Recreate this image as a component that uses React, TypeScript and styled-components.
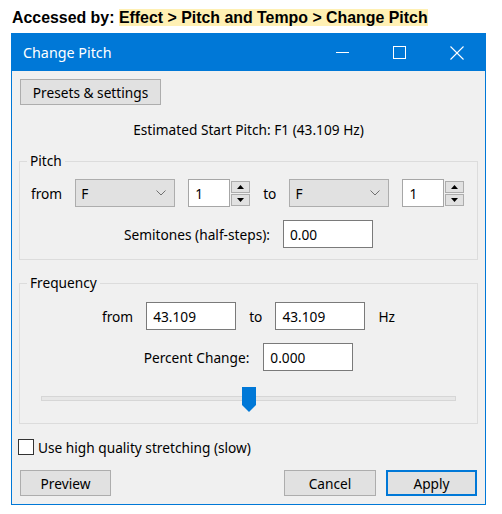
import React from 'react';
import styled, { createGlobalStyle } from 'styled-components';

const UI_FONT = `"Noto Sans", "Segoe UI", sans-serif`;
const UI_SIZE = '13.7px';

const GlobalStyle = createGlobalStyle`
  html, body { margin: 0; padding: 0; background: #ffffff; }
  body { font-family: ${UI_FONT}; }
  * { box-sizing: border-box; }
`;

const Page = styled.div`
  width: 502px;
  height: 514px;
  overflow: hidden;
`;

const Header = styled.div`
  height: 33px;
  padding: 9px 0 0 12px;
  font-family: "Liberation Sans", Arial, sans-serif;
  font-weight: bold;
  font-size: 15.9px;
  line-height: 18px;
  color: #000;
  white-space: nowrap;
`;

const Highlight = styled.span`
  background: #fff0b3;
`;

const Window = styled.div`
  margin-left: 11px;
  width: 475px;
  border: 1px solid #0078d7;
  background: #f0f0f0;
  display: flex;
  flex-direction: column;
`;

const TitleBar = styled.div`
  height: 37px;
  background: #0078d7;
  display: flex;
  align-items: center;
`;

const Title = styled.div`
  flex: 1;
  padding-left: 11px;
  color: #ffffff;
  font-family: ${UI_FONT};
  font-size: 14.3px;
`;

const CaptionButton = styled.div`
  width: 57px;
  height: 100%;
  display: flex;
  align-items: center;
  justify-content: center;
`;

const Content = styled.div`
  padding: 8px 7px 8px;
  display: flex;
  flex-direction: column;
  font-family: ${UI_FONT};
  font-size: ${UI_SIZE};
  color: #000;
`;

const Button = styled.button<{ $w: number; $default?: boolean }>`
  width: ${(p) => p.$w}px;
  height: 26px;
  padding: 0;
  border: ${(p) => (p.$default ? '2px solid #0078d7' : '1px solid #adadad')};
  background: #e1e1e1;
  font-family: ${UI_FONT};
  font-size: ${UI_SIZE};
  color: #000;
`;

const PresetsRow = styled.div`
  display: flex;
  padding-left: 1px;
`;

const Status = styled.div`
  margin-top: 15px;
  line-height: 20px;
  text-align: center;
`;

const Group = styled.fieldset<{ $mt: number; $pt: number }>`
  margin: ${(p) => p.$mt}px 0 0;
  padding: ${(p) => p.$pt}px 0 11px;
  border: 1px solid #dcdcdc;
  min-width: 0;
  display: flex;
  flex-direction: column;
`;

const Legend = styled.legend`
  margin-left: 7px;
  padding: 0 3px;
  line-height: 18px;
  height: 18px;
`;

const Row = styled.div<{ $center?: boolean; $mt?: number; $gap?: number }>`
  display: flex;
  align-items: center;
  justify-content: ${(p) => (p.$center ? 'center' : 'flex-start')};
  padding-left: ${(p) => (p.$center ? 0 : 11)}px;
  margin-top: ${(p) => p.$mt ?? 0}px;
  gap: ${(p) => p.$gap ?? 13}px;
  height: 28px;
  white-space: nowrap;
`;

const Select = styled.div`
  width: 100px;
  height: 28px;
  border: 1px solid #adadad;
  background: #e1e1e1;
  display: flex;
  align-items: center;
  justify-content: space-between;
  padding: 0 8px 0 5px;
`;

const TextBox = styled.div<{ $w: number; $light?: boolean }>`
  width: ${(p) => p.$w}px;
  height: 28px;
  border: 1px solid ${(p) => (p.$light ? '#a6a6a6' : '#7a7a7a')};
  background: #ffffff;
  display: flex;
  align-items: center;
  padding-left: 6px;
`;

const Spin = styled.div`
  display: flex;
  align-items: center;
`;

const SpinButtons = styled.div`
  display: flex;
  flex-direction: column;
  gap: 1px;
  margin-left: 1px;
  width: 19px;
  height: 25px;
`;

const SpinArrow = styled.div`
  flex: 1;
  border: 1px solid #adadad;
  background: #e1e1e1;
  display: flex;
  align-items: center;
  justify-content: center;
`;

const Slider = styled.div`
  position: relative;
  height: 25px;
  margin: 16px 21px 0;
`;

const Track = styled.div`
  margin-top: 9px;
  height: 5px;
  background: #e7e7e7;
  border: 1px solid #d6d6d6;
`;

const Thumb = styled.svg`
  position: absolute;
  top: 0;
  transform: translateX(-50%);
`;

const CheckRow = styled.div`
  margin-top: 13px;
  height: 20px;
  display: flex;
  align-items: center;
  gap: 4px;
  margin-left: -1px;
`;

const CheckBox = styled.div`
  width: 16px;
  height: 16px;
  border: 1px solid #333333;
  background: #ffffff;
`;

const ButtonRow = styled.div`
  margin-top: 13px;
  display: flex;
  gap: 10px;
  padding: 0 1px;
`;

const Spacer = styled.div`
  flex: 1;
`;

const Chevron = () => (
  <svg width="10" height="6" viewBox="0 0 10 6">
    <polyline points="0.5,0.5 5,5 9.5,0.5" fill="none" stroke="#707070" strokeWidth="1" />
  </svg>
);

const Tri = ({ up }: { up: boolean }) => (
  <svg width="7" height="4" viewBox="0 0 7 4">
    <polygon points={up ? '0,4 7,4 3.5,0' : '0,0 7,0 3.5,4'} fill="#000" />
  </svg>
);

const SpinBox = ({ value }: { value: string }) => (
  <Spin>
    <TextBox $w={42} $light>{value}</TextBox>
    <SpinButtons>
      <SpinArrow>
        <Tri up />
      </SpinArrow>
      <SpinArrow>
        <Tri up={false} />
      </SpinArrow>
    </SpinButtons>
  </Spin>
);

const NoteSelect = ({ value }: { value: string }) => (
  <Select>
    <span>{value}</span>
    <Chevron />
  </Select>
);

export default function App() {
  const sliderPos = 50;
  return (
    <Page>
      <GlobalStyle />
      <Header>
        Accessed by: <Highlight>Effect &gt; Pitch and Tempo &gt; Change Pitch</Highlight>
      </Header>
      <Window>
        <TitleBar>
          <Title>Change Pitch</Title>
          <CaptionButton>
            <svg width="13" height="13" viewBox="0 0 13 13">
              <line x1="0" y1="6.5" x2="13" y2="6.5" stroke="#fff" strokeWidth="1" />
            </svg>
          </CaptionButton>
          <CaptionButton>
            <svg width="13" height="13" viewBox="0 0 13 13">
              <rect x="0.5" y="0.5" width="12" height="12" fill="none" stroke="#fff" strokeWidth="1" />
            </svg>
          </CaptionButton>
          <CaptionButton>
            <svg width="14" height="14" viewBox="0 0 14 14">
              <line x1="0.5" y1="0.5" x2="13.5" y2="13.5" stroke="#fff" strokeWidth="1.1" />
              <line x1="13.5" y1="0.5" x2="0.5" y2="13.5" stroke="#fff" strokeWidth="1.1" />
            </svg>
          </CaptionButton>
        </TitleBar>
        <Content>
          <PresetsRow>
            <Button $w={141}>Presets &amp; settings</Button>
          </PresetsRow>
          <Status>Estimated Start Pitch: F1 (43.109 Hz)</Status>
          <Group $mt={12} $pt={9}>
            <Legend>Pitch</Legend>
            <Row>
              <span>from</span>
              <NoteSelect value="F" />
              <SpinBox value="1" />
              <span>to</span>
              <NoteSelect value="F" />
              <SpinBox value="1" />
            </Row>
            <Row $center $mt={13}>
              <span>Semitones (half-steps):</span>
              <TextBox $w={90}>0.00</TextBox>
            </Row>
          </Group>
          <Group $mt={14} $pt={10}>
            <Legend>Frequency</Legend>
            <Row $center>
              <span>from</span>
              <TextBox $w={90}>43.109</TextBox>
              <span>to</span>
              <TextBox $w={90}>43.109</TextBox>
              <span>Hz</span>
            </Row>
            <Row $center $mt={13} $gap={14}>
              <span>Percent Change:</span>
              <TextBox $w={90}>0.000</TextBox>
            </Row>
            <Slider>
              <Track />
              <Thumb
                width="14"
                height="25"
                viewBox="0 0 14 25"
                style={{ left: `${sliderPos}%` }}
              >
                <path d="M0 0 H14 V18 L7 25 L0 18 Z" fill="#0078d7" />
              </Thumb>
            </Slider>
          </Group>
          <CheckRow>
            <CheckBox />
            <span>Use high quality stretching (slow)</span>
          </CheckRow>
          <ButtonRow>
            <Button $w={91}>Preview</Button>
            <Spacer />
            <Button $w={92}>Cancel</Button>
            <Button $w={91} $default>
              Apply
            </Button>
          </ButtonRow>
        </Content>
      </Window>
    </Page>
  );
}
